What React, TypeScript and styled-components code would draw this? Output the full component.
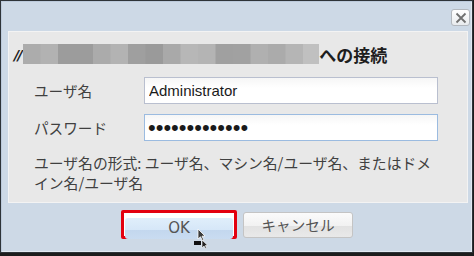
import React from "react";
import styled, { createGlobalStyle } from "styled-components";

const GlobalStyle = createGlobalStyle`
  html, body {
    margin: 0;
    padding: 0;
    background: #1c1c1c;
  }
  body {
    font-family: "Noto Sans CJK JP", "DejaVu Sans", sans-serif;
  }
`;

const Screen = styled.div`
  width: 474px;
  height: 256px;
  background: #1c1c1c;
  overflow: hidden;
`;

const Window = styled.div`
  position: relative;
  box-sizing: border-box;
  width: 473px;
  height: 253px;
  border: 1px solid #2e3338;
  background: #cdd9e6;
  box-shadow: inset 1px 1px 0 #bccadb, inset -1px -1px 0 #e2e9f1;
  display: flex;
  flex-direction: column;
  padding: 0 6px 0 7px;
`;

const TitleBar = styled.div`
  height: 30px;
  display: flex;
  justify-content: flex-end;
  align-items: flex-start;
  padding-top: 8px;
  box-sizing: border-box;
  margin-right: -4px;
`;

const CloseButton = styled.button`
  width: 19px;
  height: 17px;
  padding: 0;
  border: 1px solid #b3b8be;
  border-radius: 3px;
  background: linear-gradient(#ffffff, #e8ebee);
  display: flex;
  align-items: center;
  justify-content: center;
`;

const Panel = styled.div`
  box-sizing: border-box;
  width: 460px;
  height: 172px;
  background: #e8e8e8;
  border: 1px solid #f3f3f3;
  display: flex;
  flex-direction: column;
`;

const Heading = styled.div`
  display: flex;
  align-items: center;
  height: 22px;
  margin: 11px 0 0 5px;
  font-size: 17px;
  font-weight: 700;
  color: #1e1e1e;
`;

const Slashes = styled.span`
  font-family: "DejaVu Sans", sans-serif;
  font-style: italic;
  font-weight: 700;
  font-size: 14px;
  letter-spacing: -1.5px;
  margin-right: 2px;
  margin-top: 1px;
`;

const Form = styled.div`
  display: flex;
  flex-direction: column;
  gap: 10px;
  margin: 12px 0 0 25px;
`;

const Row = styled.div`
  display: flex;
  align-items: center;
`;

const Label = styled.label`
  width: 110px;
  font-size: 14.6px;
  color: #404040;
`;

const Input = styled.input<{ $focused?: boolean }>`
  box-sizing: border-box;
  width: 294px;
  height: 27px;
  padding: 0 4px;
  border: 1px solid ${(p) => (p.$focused ? "#9bbbe0" : "#b9bfcf")};
  background: linear-gradient(#f6f6f6, #ffffff 40%);
  font-family: "Liberation Sans", "Noto Sans CJK JP", sans-serif;
  font-size: 15px;
  color: #1a1a1a;
  outline: none;

  &[type="password"] {
    font-size: 22px;
    padding-left: 3px;
  }
`;

const Help = styled.p`
  margin: 12px 0 0 25px;
  font-size: 14.8px;
  line-height: 20px;
  color: #404040;
  white-space: nowrap;
`;

const Buttons = styled.div`
  display: flex;
  justify-content: center;
  align-items: center;
  gap: 6px;
  margin-top: 7px;
`;

const Highlight = styled.div`
  box-sizing: border-box;
  width: 116px;
  height: 29px;
  border: 3px solid #e3000f;
  padding: 1px;
  background: #ffffff;
  border-radius: 2px;
`;

const Button = styled.button<{ $primary?: boolean }>`
  box-sizing: border-box;
  width: ${(p) => (p.$primary ? "100%" : "110px")};
  height: ${(p) => (p.$primary ? "100%" : "26px")};
  padding: 0;
  border: ${(p) => (p.$primary ? "none" : "1px solid #c4c4c4")};
  border-radius: 3px;
  background: ${(p) =>
    p.$primary
      ? "linear-gradient(#e0eefb 0%, #d6e7f8 55%, #c3d7ee 56%, #c9dcf1 100%)"
      : "linear-gradient(#fbfbfb 0%, #f1f1f1 55%, #e2e2e2 56%, #e9e9e9 100%)"};
  font-family: "DejaVu Sans", "Noto Sans CJK JP", sans-serif;
  font-size: 15px;
  color: #555555;
`;

const CancelText = styled.span`
  font-family: "Noto Sans CJK JP", sans-serif;
  font-size: 14.6px;
`;

const Pointer = styled.svg`
  position: absolute;
  left: 191px;
  top: 227px;
`;

const mosaic = [
  "#acacac", "#b2b2b2", "#9c9c9c", "#9c9c9c", "#ababab", "#b3b3b3", "#9f9f9f",
  "#9a9a9a", "#a9a9a9", "#b7b7b7", "#b4b4b4", "#a0a0a0", "#a1a1a1", "#b0b0b0",
  "#ababab", "#b5b5b5", "#c0c0c0",
];

const Mosaic: React.FC = () => (
  <svg width="296" height="20" viewBox="0 0 296 20">
    {mosaic.map((c, i) => (
      <rect key={i} x={i * 17.5} y={0} width={18} height={20} fill={c} />
    ))}
  </svg>
);

export default function App() {
  return (
    <Screen>
      <GlobalStyle />
      <Window>
        <TitleBar>
          <CloseButton aria-label="close">
            <svg width="12" height="12" viewBox="0 0 12 12">
              <path d="M1.5 1.5 L10.5 10.5 M10.5 1.5 L1.5 10.5" stroke="#707070" strokeWidth="1.8" />
            </svg>
          </CloseButton>
        </TitleBar>
        <Panel>
          <Heading>
            <Slashes>//</Slashes>
            <Mosaic />
            <span>への接続</span>
          </Heading>
          <Form>
            <Row>
              <Label>ユーザ名</Label>
              <Input defaultValue="Administrator" />
            </Row>
            <Row>
              <Label>パスワード</Label>
              <Input type="password" defaultValue="aaaaaaaaaaaaa" $focused />
            </Row>
          </Form>
          <Help>
            ユーザ名の形式: ユーザ名、マシン名/ユーザ名、またはドメ
            <br />
            イン名/ユーザ名
          </Help>
        </Panel>
        <Buttons>
          <Highlight>
            <Button $primary>OK</Button>
          </Highlight>
          <Button>
            <CancelText>キャンセル</CancelText>
          </Button>
        </Buttons>
        <Pointer width="22" height="22" viewBox="0 0 22 22">
          <path d="M6 1 L6 11 L8.5 8.8 L10.3 12.5 L11.8 11.8 L10 8.2 L13 8 Z" fill="#3a3a3a" stroke="#ffffff" strokeWidth="0.8" />
          <rect x="2" y="13" width="7" height="4" fill="#111" />
          <path d="M10 12 L10 20 L12 18 L13.5 20.5 L14.5 20 L13.3 17.5 L15.5 17.3 Z" fill="#222" stroke="#fff" strokeWidth="0.6" />
        </Pointer>
      </Window>
    </Screen>
  );
}
